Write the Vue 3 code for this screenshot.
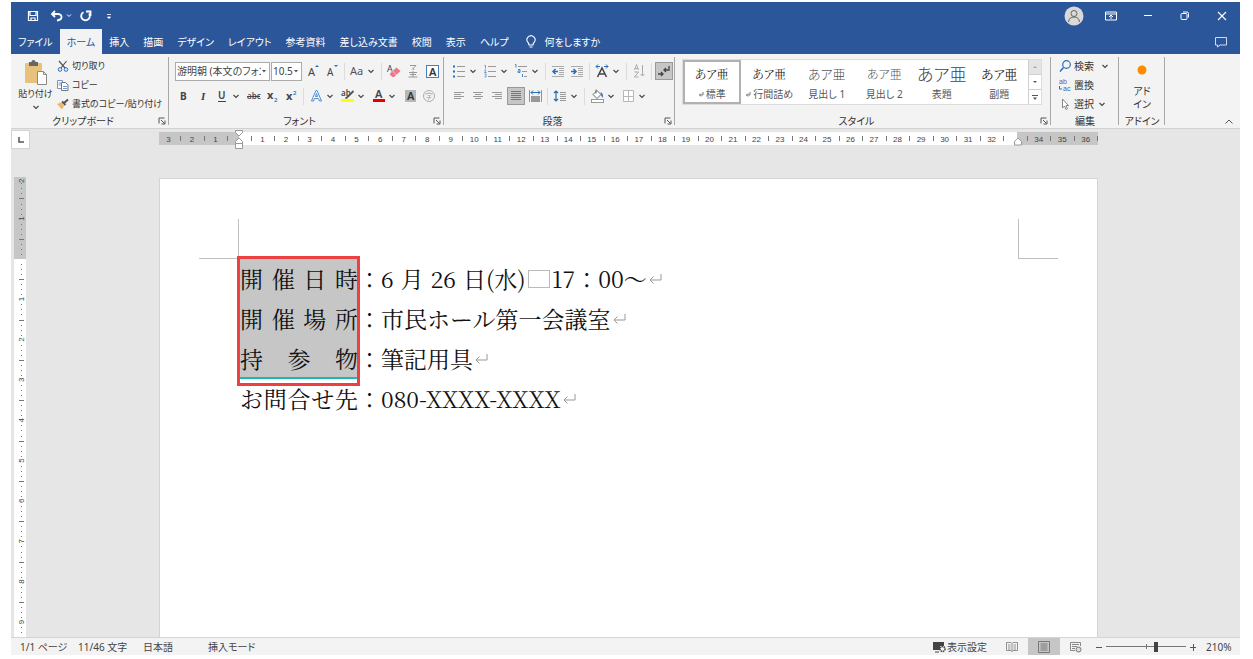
<script setup>
import { ref } from 'vue'

const tabs = ['ファイル', 'ホーム', '挿入', '描画', 'デザイン', 'レイアウト', '参考資料', '差し込み文書', '校閲', '表示', 'ヘルプ']
const activeTab = ref('ホーム')
const zoom = ref(63)

const ruled = '<path d="M7 4.500h8M7 9.500h8M7 14.500h8" stroke="#999"/>'
const block = '<path d="M3 4.500h12M10 6.500h5M10 8.500h5M10 10.500h5M10 12.500h5M3 14.500h12" stroke="#aaa"/>'
const icons = {
  grow: '<text x="4" y="14" font-size="11" fill="#444">A</text><path d="M11 5l2-2 2 2z" fill="#2b6cb8"/>',
  shrink: '<text x="4" y="14" font-size="10" fill="#444">A</text><path d="M11 3l2 2 2-2z" fill="#2b6cb8"/>',
  case: '<text x="2" y="13" font-size="11" fill="#555">Aa</text>',
  eraser: '<text x="2" y="10" font-size="9" fill="#444">A</text><path d="M5 11.500l6.500-6 4 3.500-6.500 6H7.500l-2.500-2z" fill="#ea7a88"/><path d="M7.500 9l4 4" stroke="#f7c3c9"/>',
  ruby: '<path d="M6 3.500h6l-4 4M9 6l1 2M5 10.500h8M6 12.500h6M9 9v6M4.500 15h9" stroke="#999" fill="none"/>',
  boxed: '<rect x="3.500" y="3.500" width="12" height="12" fill="#fff" stroke="#4a7ebb"/><text x="6" y="13.500" font-size="11" font-weight="600" fill="#333">A</text>',
  bold: '<text x="5" y="13" font-size="10" font-weight="700" fill="#444">B</text>',
  italic: '<text x="7" y="13" font-size="11" font-style="italic" font-weight="700" font-family="Liberation Serif" fill="#444">I</text>',
  underline: '<text x="5" y="12" font-size="10" font-weight="600" fill="#444">U</text><path d="M5 14.500h8" stroke="#444"/>',
  strike: '<text x="3" y="12" font-size="8" font-weight="600" fill="#555">abc</text><path d="M3 9.500h13" stroke="#444"/>',
  sub: '<text x="4" y="12" font-size="11" font-weight="700" fill="#444">x</text><text x="11" y="15" font-size="6" font-weight="600" fill="#2b6cb8">2</text>',
  sup: '<text x="4" y="13" font-size="11" font-weight="700" fill="#444">x</text><text x="11" y="8" font-size="6" font-weight="600" fill="#2b6cb8">2</text>',
  effect: '<path d="M4.500 14L9 3.500h1L14.500 14h-2l-1-2.500h-4l-1 2.500zM8.500 9.500h2L9.500 6.500z" fill="#fff" stroke="#4a8ad4"/>',
  marker: '<text x="3" y="9" font-size="8" font-weight="600" fill="#444">ab</text><path d="M15.500 4l-6 6-2 1.500" fill="none" stroke="#555" stroke-width="1.800"/><rect x="3" y="12" width="13" height="3" fill="#ff0"/>',
  color: '<text x="6" y="11" font-size="11" font-weight="600" fill="#444">A</text><rect x="4" y="12" width="12" height="3" fill="#e60000"/>',
  shade: '<rect x="5" y="3" width="11" height="12" fill="#b8b8b8"/><text x="7" y="13" font-size="11" font-weight="600" fill="#333">A</text>',
  enclose: '<circle cx="10" cy="9" r="5.500" fill="none" stroke="#b5a9b5"/><path d="M10 5v1.500M7 8V6.500h6V8M8.500 8.500h3L10 10v2.500H9M7.500 10.500h5" fill="none" stroke="#b5a9b5" stroke-width=".8"/>',
  bullets: '<path d="M3 4.500h2M3 9.500h2M3 14.500h2" stroke="#2b6cb8" stroke-width="1.800"/>' + ruled,
  numbers: '<path d="M3.500 3.500h1v3M3.500 8h1.500L3.500 10.500h2M3.500 12h1.500v3H3.500" fill="none" stroke="#6b9bd1"/>' + ruled,
  levels: '<path d="M3 2.500h1v3M6 7.500h2v3H6V9h2M10.500 12v3" fill="none" stroke="#4a84c4"/><path d="M6 4.500h9M10 9.500h5M12 14.500h3" stroke="#999"/>',
  outdent: block + '<path d="M9 9.500H4M6.500 7L4 9.500l2.500 2.500" fill="none" stroke="#2b6cb8" stroke-width="1.500"/>',
  indent: block + '<path d="M3 9.500h5M5.500 7L8 9.500l-2.500 2.500" fill="none" stroke="#2b6cb8" stroke-width="1.500"/>',
  stretch: '<path d="M3 4.500h4M5 2.500l-2 2 2 2M15 4.500h-4M13 2.500l2 2-2 2" fill="none" stroke="#2b6cb8"/><path d="M4.500 15l4.500-9 4.500 9M6 12h6" fill="none" stroke="#444" stroke-width="1.500"/>',
  sort: '<path d="M4.500 8l2-5.500 2 5.500M5 6.500h3M4.500 10h4l-4 5h4M12.500 3v11M10.500 12l2 2 2-2" fill="none" stroke="#aaa"/>',
  marks: '<path d="M14 4v4h-5M11 6l-2 2 2 2M3 12h5M6 10l2 2-2 2" fill="none" stroke="#444" stroke-width="1.300"/>',
  left: '<path d="M4 5.500h10M4 7.500h7M4 9.500h10M4 11.500h7" stroke="#999"/>',
  center: '<path d="M4 5.500h10M6 7.500h6M4 9.500h10M6 11.500h6" stroke="#999"/>',
  right: '<path d="M4 5.500h10M7 7.500h7M4 9.500h10M7 11.500h7" stroke="#999"/>',
  justify: '<path d="M4 4.500h10M4 6.500h10M4 8.500h10M4 10.500h10M4 12.500h10" stroke="#777"/>',
  distribute: '<path d="M3.500 3v12M15.500 3v12" stroke="#6b9bd1"/><path d="M5 5.500h9M7 3.500l-2 2 2 2M12 3.500l2 2-2 2" fill="none" stroke="#2b6cb8"/><rect x="5" y="9" width="9" height="6" fill="#999"/>',
  spacing: '<path d="M5 4v10M3 6l2-2 2 2M3 12l2 2 2-2" fill="none" stroke="#2b6cb8" stroke-width="1.200"/><path d="M9 5.500h6M9 7.500h6M9 9.500h6M9 11.500h6M9 13.500h6" stroke="#999"/>',
  bucket: '<path d="M8 2.500v4M5 7.500l4-4 4 4-4 4z" fill="#fff" stroke="#666"/><path d="M12.500 5q3.500 2 2 6L13 8z" fill="#2b6cb8"/><rect x="3.500" y="12.500" width="12" height="3" fill="#fff" stroke="#999"/>',
  borders: '<path d="M4.500 3.500h10v11h-10zM9.500 3.500v11M4.500 9.500h10" fill="#fff" stroke="#b8b8b8"/>',
  caret: '<path d="M2.500 4l2.500 2.500L7.500 4" fill="none" stroke="#444" stroke-width="1.100"/>',
  launch: '<path d="M1 6.500V1h5.500M3 3l3.500 3.500M7 3.500V7H3.500" fill="none" stroke="#555"/>',
  drop: '<path d="M1 2h4L3 4.500z" fill="#555"/>'
}

const sep = { sep: true }
const fontRow1 = [
  { icon: 'grow', label: 'フォント サイズの拡大' },
  { icon: 'shrink', label: 'フォント サイズの縮小' },
  sep,
  { icon: 'case', label: '文字種の変換', menu: true },
  sep,
  { icon: 'eraser', label: '書式のクリア' },
  { icon: 'ruby', label: 'ルビ' },
  { icon: 'boxed', label: '囲み線' }
]
const fontRow2 = [
  { icon: 'bold', label: '太字' },
  { icon: 'italic', label: '斜体' },
  { icon: 'underline', label: '下線', menu: true },
  { icon: 'strike', label: '取り消し線' },
  { icon: 'sub', label: '下付き' },
  { icon: 'sup', label: '上付き' },
  sep,
  { icon: 'effect', label: '文字の効果', menu: true },
  { icon: 'marker', label: '蛍光ペンの色', menu: true },
  { icon: 'color', label: 'フォントの色', menu: true },
  { icon: 'shade', label: '文字の網かけ' },
  { icon: 'enclose', label: '囲い文字' }
]
const paraRow1 = [
  { icon: 'bullets', label: '箇条書き', menu: true },
  { icon: 'numbers', label: '段落番号', menu: true },
  { icon: 'levels', label: 'アウトライン', menu: true },
  sep,
  { icon: 'outdent', label: 'インデントを減らす' },
  { icon: 'indent', label: 'インデントを増やす' },
  sep,
  { icon: 'stretch', label: '拡張書式', menu: true },
  sep,
  { icon: 'sort', label: '並べ替え' },
  sep,
  { icon: 'marks', label: '編集記号の表示', on: true }
]
const paraRow2 = [
  { icon: 'left', label: '左揃え' },
  { icon: 'center', label: '中央揃え' },
  { icon: 'right', label: '右揃え' },
  { icon: 'justify', label: '両端揃え', on: true },
  { icon: 'distribute', label: '均等割り付け' },
  sep,
  { icon: 'spacing', label: '行間', menu: true },
  sep,
  { icon: 'bucket', label: '塗りつぶし', menu: true },
  { icon: 'borders', label: '罫線', menu: true }
]
const styles = [
  { name: '標準', mark: true, kind: 'body' },
  { name: '行間詰め', mark: true, kind: 'body' },
  { name: '見出し 1', kind: 'head' },
  { name: '見出し 2', kind: 'head small' },
  { name: '表題', kind: 'head title' },
  { name: '副題', kind: 'body wide' }
]

const lines = [
  { label: '開催日時', selected: true },
  { label: '開催場所', text: '市民ホール第一会議室', selected: true },
  { label: '持参物', text: '筆記用具', selected: true },
  { label: 'お問合せ先', text: '080-XXXX-XXXX' }
]

const unit = 23.52
const hNumbers = []
const hTicks = []
for (let n = -3; n <= 36; n++) {
  if (n !== 0 && n !== 33) hNumbers.push({ x: 80 + n * unit, text: Math.abs(n) })
  hTicks.push(Math.round(80 + (n + 0.5) * unit))
}

const vUnit = 40.35
const vMarks = []
for (let i = -16; i <= 74; i++) {
  const y = 82 + (i * vUnit) / 8
  if (i === 0) continue
  if (i % 8 === 0) vMarks.push({ type: 'n', y: Math.max(y + 2, 6), text: Math.abs(i / 8) })
  else if (i % 4 === 0) vMarks.push({ type: 'l', y: Math.round(y) })
  else vMarks.push({ type: 'd', y: Math.round(y) })
}
</script>

<template>
  <div class="window">
    <header class="top">
      <div class="titlebar">
        <div class="quick">
          <button aria-label="上書き保存"><svg width="12" height="12"><path d="M1.500 1.500h9v9h-9zM3 1.500v4h6v-4M4 10.500V8h4v2.500" fill="none" stroke="#fff" stroke-width="1.200" /></svg></button>
          <button aria-label="元に戻す"><svg width="14" height="12"><path d="M5 1L2 4l3 3M2 4h6q4 .5 3.500 3.500Q11 10 7 10.500" fill="none" stroke="#fff" stroke-width="1.800" /></svg></button>
          <button class="mini" aria-label="元に戻す一覧"><svg width="6" height="6"><path d="M1 1.500L3 3.500 5 1.500" fill="none" stroke="#fff" /></svg></button>
          <button class="redo" aria-label="繰り返し"><svg width="14" height="12"><path d="M4.500 2.200A4.300 4.300 0 1 0 10 3.500M7 1.500h4.500V6" fill="none" stroke="#fff" stroke-width="1.800" /></svg></button>
          <button class="custom" aria-label="クイック アクセスのカスタマイズ"><svg width="6" height="8"><path d="M1 2.500h4M1.500 5h3l-1.500 1.500z" fill="#fff" stroke="#fff" stroke-width=".8" /></svg></button>
        </div>
        <div class="sys">
          <button aria-label="アカウント"><svg width="20" height="20"><circle cx="10" cy="10" r="9.500" fill="#d9d9d9" /><circle cx="10" cy="7.500" r="3" fill="none" stroke="#666" /><path d="M4.500 16q.5-5 5.500-5t5.500 5" fill="none" stroke="#666" /></svg></button>
          <button aria-label="リボンの表示オプション"><svg width="12" height="10"><path d="M.5 1h11v8H.5zM.5 3h11M6 8V4.500M4 6l2-2 2 2" fill="none" stroke="#fff" /></svg></button>
          <button aria-label="最小化"><svg width="10" height="10"><path d="M1 4.500h8" stroke="#fff" /></svg></button>
          <button aria-label="元のサイズに戻す"><svg width="10" height="10"><rect x="1" y="2.500" width="6" height="6" rx="1" fill="none" stroke="#fff" /><path d="M3 1h4q1.500 0 1.500 1.500v4" fill="none" stroke="#fff" /></svg></button>
          <button aria-label="閉じる"><svg width="10" height="10"><path d="M1 1l8 8M9 1L1 9" stroke="#fff" stroke-width="1.100" /></svg></button>
        </div>
      </div>
      <nav class="tabs">
        <button v-for="t in tabs" :key="t" class="tab" :class="{ active: t === activeTab }" @click="activeTab = t">{{ t }}</button>
        <button class="tell">
          <svg width="12" height="14"><path d="M4 10Q4 8.500 3 7.500a4 4 0 1 1 6 0Q8 8.500 8 10zM4.500 12h3" fill="none" stroke="#fff" stroke-width="1.100" /></svg>
          何をしますか
        </button>
        <button class="comment" aria-label="コメント"><svg width="14" height="12"><path d="M1.500 1.500h11v7.500H6L3.500 11V9h-2z" fill="none" stroke="#cfdcf0" /></svg></button>
      </nav>
    </header>

    <section class="ribbon">
      <div class="group clip">
        <div class="body">
          <button class="paste">
            <svg width="24" height="26"><rect x="1" y="3" width="17" height="20" rx="1" fill="#e8c17c" /><path d="M5 2h2.500a2 2 0 0 1 4 0H14v4H5z" fill="#666" /><path d="M13.500 11.500h6l3 3v10h-9z" fill="#fff" stroke="#8a8a8a" /><path d="M19.500 11.500v3h3" fill="none" stroke="#8a8a8a" /></svg>
            <span>貼り付け</span>
            <svg width="10" height="10" v-html="icons.caret"></svg>
          </button>
          <div class="stack">
            <button><svg width="12" height="12"><path d="M2 1l6 7M9.500 1L4 8" stroke="#555" stroke-width="1.200" /><circle cx="3" cy="9.500" r="1.800" fill="none" stroke="#2b6cb8" /><circle cx="9" cy="9.500" r="1.800" fill="none" stroke="#2b6cb8" /></svg>切り取り</button>
            <button><svg width="12" height="12"><path d="M.5 1.500h5v8h-5zM1.500 4h3M1.500 6h3" fill="#fff" stroke="#7a96b8" /><path d="M4.500 3.500h4l2.500 2.500v5.500H4.500z" fill="#fff" stroke="#777" /><path d="M6 7.500h4M6 9.500h4" stroke="#6b9bd1" /></svg>コピー</button>
            <button><svg width="12" height="12"><path d="M0 6l4-1.500 3 3.500-2 3.500z" fill="#eab765" /><path d="M5 3.500l3.500 3.500M7 5l4-3.500" stroke="#555" stroke-width="2" /></svg>書式のコピー/貼り付け</button>
          </div>
        </div>
        <footer class="more">クリップボード<button class="launch" aria-label="クリップボードの詳細"><svg width="8" height="8" v-html="icons.launch"></svg></button></footer>
      </div>

      <div class="group font">
        <div class="rows">
          <div class="row">
            <span class="combo name"><select aria-label="フォント"><option>游明朝 (本文のフォント)</option></select><svg width="6" height="6" v-html="icons.drop"></svg></span>
            <span class="combo size"><select aria-label="フォント サイズ"><option>10.5</option></select><svg width="6" height="6" v-html="icons.drop"></svg></span>
            <template v-for="(i, k) in fontRow1" :key="k">
              <i v-if="i.sep" class="sep"></i>
              <button v-else class="ic" :aria-label="i.label"><svg width="18" height="18" v-html="icons[i.icon]"></svg></button>
              <button v-if="i.menu" class="dd" :aria-label="i.label + 'の一覧'"><svg width="10" height="10" v-html="icons.caret"></svg></button>
            </template>
          </div>
          <div class="row">
            <template v-for="(i, k) in fontRow2" :key="k">
              <i v-if="i.sep" class="sep"></i>
              <button v-else class="ic" :aria-label="i.label"><svg width="18" height="18" v-html="icons[i.icon]"></svg></button>
              <button v-if="i.menu" class="dd" :aria-label="i.label + 'の一覧'"><svg width="10" height="10" v-html="icons.caret"></svg></button>
            </template>
          </div>
        </div>
        <footer class="more">フォント<button class="launch" aria-label="フォントの詳細"><svg width="8" height="8" v-html="icons.launch"></svg></button></footer>
      </div>

      <div class="group para">
        <div class="rows">
          <div v-for="(r, n) in [paraRow1, paraRow2]" :key="n" class="row">
            <template v-for="(i, k) in r" :key="k">
              <i v-if="i.sep" class="sep"></i>
              <button v-else class="ic" :class="{ on: i.on }" :aria-label="i.label"><svg width="18" height="18" v-html="icons[i.icon]"></svg></button>
              <button v-if="i.menu" class="dd" :aria-label="i.label + 'の一覧'"><svg width="10" height="10" v-html="icons.caret"></svg></button>
            </template>
          </div>
        </div>
        <footer class="more">段落<button class="launch" aria-label="段落の詳細"><svg width="8" height="8" v-html="icons.launch"></svg></button></footer>
      </div>

      <div class="group style">
        <div class="gallery">
          <button v-for="(s, k) in styles" :key="s.name" class="card" :class="{ picked: k === 0 }">
            <span class="sample" :class="s.kind">あア亜</span>
            <span class="cap"><svg v-if="s.mark" width="6" height="6"><path d="M5 1v3H1.500M3 2.500L1.500 4 3 5.500" fill="none" stroke="#666" stroke-width=".9" /></svg>{{ s.name }}</span>
          </button>
          <div class="scroll">
            <button class="off" aria-label="前の行"><svg width="6" height="6"><path d="M1 4h4L3 2z" fill="#aaa" /></svg></button>
            <button aria-label="次の行"><svg width="6" height="6"><path d="M1 2h4L3 4z" fill="#555" /></svg></button>
            <button aria-label="その他"><svg width="6" height="7"><path d="M0 1.500h6" stroke="#555" /><path d="M1 3.500h4L3 6z" fill="#555" /></svg></button>
          </div>
        </div>
        <footer class="more">スタイル<button class="launch" aria-label="スタイルの詳細"><svg width="8" height="8" v-html="icons.launch"></svg></button></footer>
      </div>

      <div class="group edit">
        <div class="stack">
          <button><svg width="12" height="12"><circle cx="7.500" cy="4.500" r="3.800" fill="none" stroke="#2b6cb8" stroke-width="1.200" /><path d="M4.500 7.500L1 11.500" stroke="#2b6cb8" stroke-width="1.500" /></svg>検索<svg class="gap" width="10" height="10" v-html="icons.caret"></svg></button>
          <button><svg class="swap" width="12" height="16"><text x="0" y="7" fill="#7b4fa3">ab</text><text x="4" y="14" fill="#2b6cb8">ac</text><path d="M.5 9v3H3" fill="none" stroke="#2b6cb8" /></svg>置換</button>
          <button><svg width="12" height="12"><path d="M3.500 1v9l2-2 1.500 3.500 1.500-.8L7 7.500h2.500z" fill="#fff" stroke="#777" stroke-width=".9" /></svg>選択<svg width="10" height="10" v-html="icons.caret"></svg></button>
        </div>
        <footer>編集</footer>
      </div>

      <div class="group addin">
        <button class="add">
          <svg width="12" height="12"><circle cx="6" cy="6" r="4.500" fill="#ff8c00" /></svg>
          <span>アド<br />イン</span>
        </button>
        <footer>アドイン</footer>
      </div>
      <button class="collapse" aria-label="リボンを折りたたむ"><svg width="10" height="8"><path d="M1.500 5.500L5 2l3.500 3.500" fill="none" stroke="#555" /></svg></button>
    </section>

    <main class="work">
      <div class="side">
        <button class="tabsel" aria-label="タブの種類"><svg width="8" height="8"><path d="M2 1v5h5" fill="none" stroke="#555" stroke-width="1.500" /></svg></button>
        <svg class="vruler">
          <rect width="12" height="100%" fill="#fff" />
          <rect width="12" height="82" fill="#c6c6c6" />
          <template v-for="(m, k) in vMarks" :key="k">
            <text v-if="m.type === 'n'" :transform="`translate(10 ${m.y}) rotate(-90)`" class="rnum">{{ m.text }}</text>
            <rect v-else-if="m.type === 'l'" x="5" :y="m.y" width="5" height="1" fill="#777" />
            <rect v-else x="7" :y="m.y" width="1" height="1" fill="#777" />
          </template>
        </svg>
      </div>
      <div class="canvas">
        <svg class="hruler" width="939" height="22">
          <rect y="3" width="939" height="13" fill="#c6c6c6" />
          <rect x="80" y="3" width="778" height="13" fill="#fff" />
          <text v-for="n in hNumbers" :key="n.x" :x="n.x" y="13" text-anchor="middle" class="rnum">{{ n.text }}</text>
          <rect v-for="t in hTicks" :key="t" :x="t" y="7" width="1" height="5" fill="#777" />
          <path d="M76.500 1.500h7v2L80 7l-3.500-3.500zM76.500 14.500v-2L80 9l3.500 3.500v7h-7zM76.500 14.500h7M855.500 16v-3.500L859 9l3.500 3.500V16z" fill="#fff" stroke="#999" />
        </svg>
        <article class="page">
          <i class="crop tl"></i><i class="crop tr"></i>
          <div class="text">
            <p v-for="(l, k) in lines" :key="k">
              <span class="label" :class="{ selected: l.selected }"><span v-for="c in l.label" :key="c">{{ c }}</span></span>
              <span class="colon">：</span>
              <template v-if="l.text">{{ l.text }}</template>
              <template v-else>6<span class="kan">月</span>26<span class="kan end">日</span>(水)<i class="zsp"></i>17：00～</template>
              <svg width="16" height="16"><path d="M14 3v6H3M6.500 5.500L3 9l3.500 3.500" fill="none" stroke="#999" /></svg>
            </p>
            <i class="teal"></i>
            <i class="frame"></i>
          </div>
        </article>
      </div>
    </main>

    <footer class="status">
      <span class="s1">1/1 ページ</span><span class="s2">11/46 文字</span><span class="s3">日本語</span><span>挿入モード</span>
      <div class="views">
        <button class="disp"><svg width="13" height="12"><path d="M0 1h11v4H7v4H0z" fill="#444" /><path d="M2 11h4" stroke="#444" /><circle cx="9.500" cy="8" r="2.500" fill="none" stroke="#444" stroke-width="1.500" stroke-dasharray="1.500 .6" /></svg>表示設定</button>
        <button class="view" aria-label="閲覧モード"><svg width="12" height="12"><path d="M.5 1.500H5l1 1 1-1h4.500v8H7l-1 1-1-1H.5zM6 2.500v8M2 4h2.500M2 6h2.500M2 8h2.500M7.500 4H10M7.500 6H10M7.500 8H10" fill="none" stroke="#888" stroke-width=".9" /></svg></button>
        <button class="view cur" aria-label="印刷レイアウト"><svg width="12" height="12"><path d="M.5.5h11v11H.5zM2.500 3h7M2.500 5h7M2.500 7h7M2.500 9h7" fill="none" stroke="#777" /></svg></button>
        <button class="view" aria-label="Web レイアウト"><svg width="12" height="12"><path d="M10.500 5V1.500H.5v8H5M2 3.500h7M2 5.500h5M2 7.500h3" fill="none" stroke="#888" /><circle cx="8.500" cy="8.500" r="2.500" fill="#ddd" stroke="#777" /></svg></button>
        <button class="pm" aria-label="縮小"><svg width="8" height="8"><path d="M1 4.500h6" stroke="#555" /></svg></button>
        <input v-model="zoom" type="range" min="0" max="100" aria-label="ズーム" />
        <button class="pm" aria-label="拡大"><svg width="8" height="8"><path d="M1 4.500h6M4.500 1v7" stroke="#555" /></svg></button>
        <span class="pct">210%</span>
      </div>
    </footer>
  </div>
</template>

<style>
body { background: #fff; }
</style>

<style scoped>
.window { font-family: "Noto Sans", "Noto Sans CJK JP", sans-serif; font-feature-settings: "palt"; box-sizing: border-box; height: 100vh; padding: 2px 13px 4px 11px; display: flex; flex-direction: column; font-size: 10px; line-height: 14px; color: #333; overflow: hidden; }
button { font: inherit; font-feature-settings: inherit; color: inherit; background: none; border: 0; padding: 0; margin: 0; display: flex; align-items: center; justify-content: center; white-space: nowrap; }
svg { display: block; flex: none; }
footer { display: block; }

.top { background: #2b579a; color: #fff; flex: none; }
.titlebar { height: 27px; display: flex; justify-content: space-between; align-items: center; }
.quick { display: flex; align-items: center; padding-left: 16px; gap: 11px; }
.quick .mini { margin-left: -9px; }
.quick .redo { margin-left: -4px; }
.quick .custom { margin-left: 2px; }
.sys { display: flex; align-items: center; }
.sys button { width: 37px; height: 24px; }
.tabs { height: 25px; display: flex; align-items: stretch; }
.tab { padding: 0 7px; }
.tab.active { background: #f3f3f3; color: #2b579a; }
.tell { margin-left: 9px; gap: 8px; }
.comment { margin-left: auto; width: 38px; }

.ribbon { flex: none; height: 74px; display: flex; background: #f3f3f3; border-bottom: 1px solid #d2d2d2; }
.group { box-sizing: border-box; flex: none; display: flex; flex-direction: column; position: relative; padding: 2px 6px 0; }
.group::after { content: ""; position: absolute; right: 0; top: 3px; bottom: 3px; width: 1px; background: #a8a8a8; }
.group > footer { margin-top: auto; height: 14px; text-align: center; white-space: nowrap; }
.group > .more { padding-right: 14px; }
.launch { position: absolute; right: 3px; bottom: 3px; width: 8px; height: 8px; }
.clip { width: 158px; }
.font { width: 275px; }
.para { width: 231px; }
.style { width: 376px; padding-left: 7px; }
.edit { width: 68px; }
.addin { width: 46px; padding: 2px 0 0; }
.body { display: flex; gap: 3px; font-size: 9px; }
.paste { flex-direction: column; width: 37px; padding-top: 2px; }
.paste svg + span { line-height: 16px; }
.stack { display: flex; flex-direction: column; align-items: flex-start; }
.stack button { height: 19px; gap: 3px; }
.edit .stack { padding-left: 2px; }
.edit .stack .gap { margin-left: 3px; }
.swap { font-family: "Liberation Sans", sans-serif; font-size: 7px; line-height: 7px; }
.rows { padding-top: 5px; display: flex; flex-direction: column; gap: 5px; }
.row { height: 20px; display: flex; align-items: center; gap: 1px; }
.ic { width: 18px; height: 18px; flex: none; }
.ic.on { background: #c6c6c6; outline: 1px solid #999; outline-offset: -1px; }
.dd { width: 10px; height: 18px; flex: none; margin: 0 2px 0 -1px; }
.sep { width: 1px; height: 17px; background: #dcdcdc; margin: 0 2px; flex: none; }
.combo { display: flex; align-items: center; height: 19px; box-sizing: border-box; border: 1px solid #ababab; background: #fff; padding-right: 2px; overflow: hidden; flex: none; }
.combo.name { width: 95px; }
.combo.size { width: 31px; margin-right: 1px; }
.combo select { appearance: none; flex: 1; min-width: 0; border: 0; padding: 0 0 0 1px; background: none; font: inherit; font-feature-settings: inherit; color: #444; text-overflow: clip; }

.gallery { display: flex; margin-top: 3px; height: 46px; border: 1px solid #dcdcdc; background: #fff; width: 360px; box-sizing: border-box; }
.card { flex: 1; min-width: 0; flex-direction: column; box-sizing: border-box; border: 2px solid transparent; padding-top: 3px; }
.card.picked { border-color: #b5b0b0; }
.sample { font-family: "Noto Serif CJK JP", "Noto Sans CJK JP", serif; font-size: 12px; height: 20px; line-height: 20px; color: #222; }
.sample.wide { font-size: 13px; }
.sample.head { font-family: "Noto Sans CJK JP", sans-serif; font-size: 13px; font-weight: 300; color: #555; }
.sample.small { font-size: 12px; }
.sample.title { font-size: 17px; color: #444; }
.cap { display: flex; align-items: center; gap: 2px; line-height: 20px; color: #555; }
.scroll { width: 12px; border-left: 1px solid #d0d0d0; display: flex; flex-direction: column; }
.scroll button { flex: 1; }
.scroll button + button { border-top: 1px solid #d0d0d0; }
.scroll .off { background: #e4e4e4; }
.add { flex-direction: column; padding-top: 8px; gap: 9px; line-height: 13px; }
.collapse { margin-left: auto; align-self: flex-end; width: 22px; height: 12px; }

.work { flex: 1; min-height: 0; display: flex; background: #e6e6e6; overflow: hidden; }
.side { width: 16px; display: flex; flex-direction: column; flex: none; box-sizing: border-box; padding-left: 1px; }
.tabsel { width: 17px; height: 17px; flex: none; margin: 2px 0 29px; background: #fff; outline: 1px solid #d4d4d4; }
.vruler { flex: 1; min-height: 0; width: 12px; margin-left: 2px; }
.rnum { font-family: "Liberation Sans", sans-serif; font-size: 8px; fill: #444; }
.canvas { flex: 1; min-width: 0; padding-right: 10px; display: flex; flex-direction: column; align-items: center; }
.hruler { overflow: visible; }
.page { flex: 1; box-sizing: border-box; width: 939px; margin-top: 27px; padding: 80px; background: #fff; border: 1px solid #d4d4d4; border-bottom: 0; position: relative; }
.crop { position: absolute; top: 40px; width: 40px; height: 40px; box-sizing: border-box; border-bottom: 1px solid #c0c0c0; }
.crop.tl { left: 39px; border-right: 1px solid #c0c0c0; }
.crop.tr { right: 39px; border-left: 1px solid #c0c0c0; }
.text { position: relative; font-family: "Noto Serif CJK JP", "Noto Sans CJK JP", serif; font-size: 23px; line-height: 40px; color: #111; font-feature-settings: normal; }
.text p { margin: 0; height: 40px; display: flex; align-items: center; white-space: nowrap; }
.label { display: flex; justify-content: space-between; width: 118px; flex: none; }
.label.selected { background: #c6c6c6; }
.colon { width: 23px; flex: none; }
.kan { margin: 0 7px; }
.kan.end { margin-right: 0; }
.zsp { width: 22px; height: 18px; box-sizing: border-box; border: 1px solid #bbb; margin: 0 2px; }
.teal { position: absolute; left: 0; top: 118px; width: 118px; height: 2px; background: #1fb5b0; }
.frame { position: absolute; left: -3px; top: -3px; width: 117px; height: 124px; border: 3px solid #ed4040; }

.status { flex: none; height: 17px; border-top: 1px solid #d4d4d4; background: #f3f3f3; display: flex; align-items: center; padding-left: 9px; color: #444; }
.s1 { width: 58px; }
.s2 { width: 65px; }
.s3 { width: 65px; }
.views { margin-left: auto; display: flex; align-items: center; height: 17px; padding-right: 6px; }
.disp { margin-right: 9px; gap: 1px; }
.view { width: 32px; height: 17px; }
.view.cur { background: #c6c6c6; }
.pm { width: 14px; height: 14px; }
.views input { appearance: none; width: 80px; height: 12px; margin: 0; background: linear-gradient(#777, #777) center / 100% 1px no-repeat, linear-gradient(#777, #777) center / 1px 5px no-repeat; }
.views input::-webkit-slider-thumb { appearance: none; width: 4px; height: 10px; background: #444; }
.pct { width: 28px; margin-left: 6px; }
</style>
